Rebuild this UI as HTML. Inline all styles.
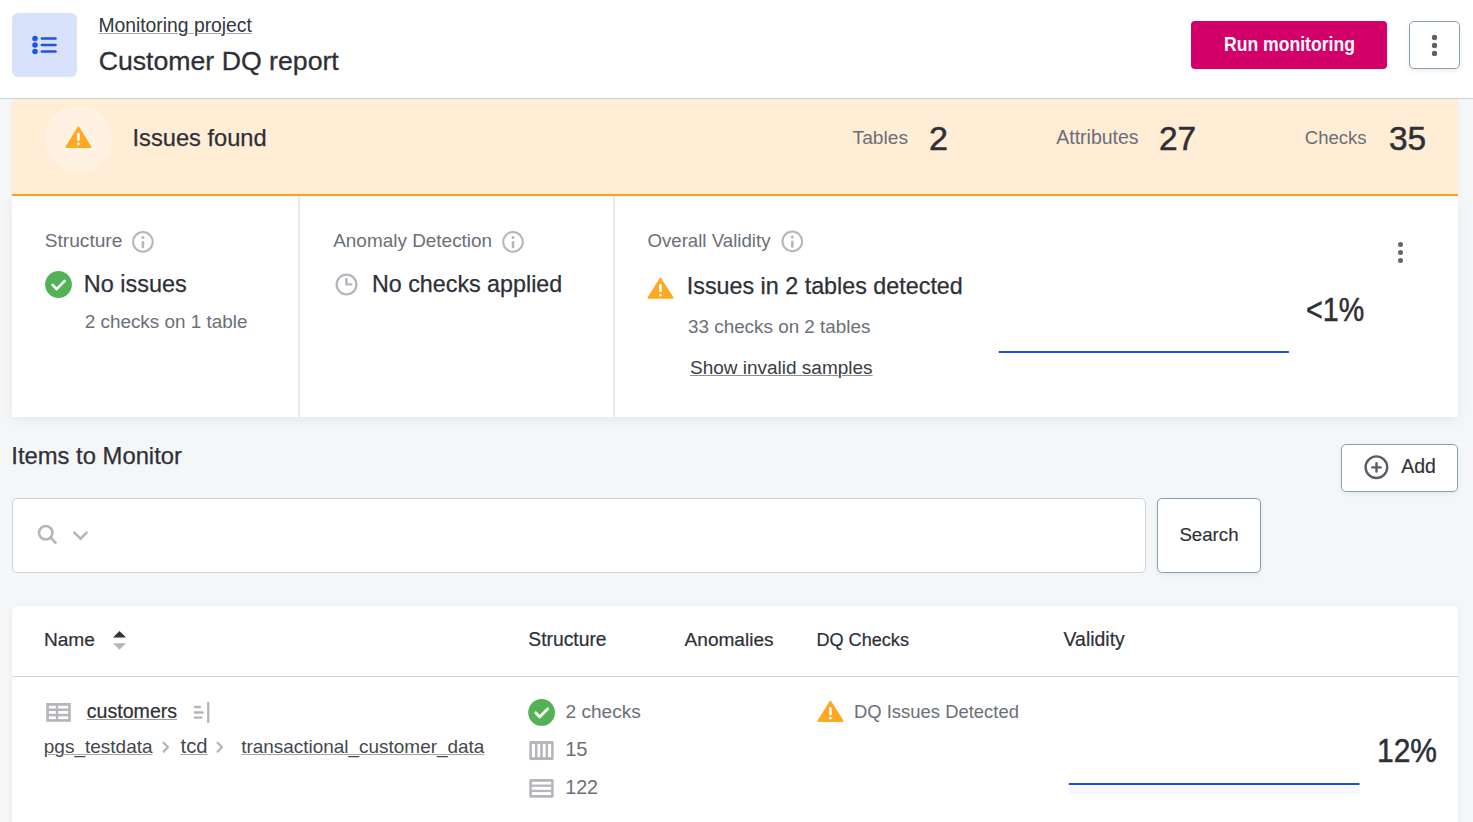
<!DOCTYPE html>
<html><head><meta charset="utf-8"><title>Customer DQ report</title>
<style>
html,body{margin:0;padding:0;}
body{width:1473px;height:822px;overflow:hidden;position:relative;background:#f4f6f8;font-family:"Liberation Sans",sans-serif;}
.t{position:absolute;white-space:nowrap;}
.b{position:absolute;box-sizing:border-box;}
svg{position:absolute;overflow:visible;}
</style></head><body>
<div class="b" style="left:0;top:0;width:1473px;height:99px;background:#fff;border-bottom:1px solid #c9d3da;"></div>
<div class="b" style="left:12px;top:13px;width:65px;height:64px;background:#d9e2fb;border-radius:6px;"></div>
<div class="b" style="left:1191px;top:21px;width:196px;height:48px;background:#d4006a;border-radius:4px;"></div>
<div class="b" style="left:1409px;top:21px;width:51px;height:48px;background:#fff;border:1px solid #87a0af;border-radius:5px;box-shadow:0 2px 5px rgba(0,0,0,0.07);"></div>
<div class="b" style="left:12px;top:99px;width:1446px;height:97px;background:#ffedd5;border-bottom:2px solid #ffa11f;box-shadow:0 1px 4px rgba(0,0,0,0.05);"></div>
<div class="b" style="left:45px;top:105px;width:67px;height:67px;border-radius:50%;background:#fff2e3;"></div>
<div class="b" style="left:12px;top:196px;width:1446px;height:221px;background:#fff;box-shadow:0 4px 12px rgba(0,0,0,0.06);"></div>
<div class="b" style="left:298px;top:196px;width:2px;height:221px;background:#e6eaed;"></div>
<div class="b" style="left:613px;top:196px;width:2px;height:221px;background:#e6eaed;"></div>
<div class="b" style="left:1341px;top:444px;width:117px;height:48px;background:#fff;border:1px solid #87a0af;border-radius:5px;box-shadow:0 2px 5px rgba(0,0,0,0.06);"></div>
<div class="b" style="left:12px;top:498px;width:1134px;height:75px;background:#fff;border:1px solid #c8d3db;border-radius:5px;"></div>
<div class="b" style="left:1157px;top:498px;width:104px;height:75px;background:#fff;border:1px solid #87a0af;border-radius:5px;box-shadow:0 2px 5px rgba(0,0,0,0.06);"></div>
<div class="b" style="left:12px;top:606px;width:1446px;height:240px;background:#fff;border-radius:6px;box-shadow:0 1px 5px rgba(0,0,0,0.06);"></div>
<div class="b" style="left:12px;top:676px;width:1446px;height:1px;background:#cdd6dd;"></div>
<svg style="left:0;top:0" width="1473" height="822">
<g fill="#1f52e8"><circle cx="35" cy="38.6" r="2.75"/><circle cx="35" cy="45" r="2.75"/><circle cx="35" cy="51.5" r="2.75"/></g>
<g stroke="#1f52e8" stroke-width="2.5" stroke-linecap="round"><path d="M41.8 38.6 H55.6 M41.8 45 H55.6 M41.8 51.5 H55.6"/></g>
<g fill="#5f6068"><circle cx="1434.5" cy="37.4" r="2.65"/><circle cx="1434.5" cy="45.4" r="2.65"/><circle cx="1434.5" cy="53.4" r="2.65"/></g>
<path d="M78.4 127.6 L90.39999999999999 147.0 L66.5 147.0 Z" fill="#ffa922" stroke="#ffa922" stroke-width="2.0" stroke-linejoin="round"/><path d="M78.4 134.2 V139.7" stroke="#fff" stroke-width="2.7" stroke-linecap="round"/><circle cx="78.4" cy="144.0" r="1.4" fill="#fff"/>
<circle cx="142.9" cy="241.9" r="9.8" fill="none" stroke="#b5b6bb" stroke-width="2"/><circle cx="142.9" cy="237.5" r="1.5" fill="#b5b6bb"/><path d="M142.9 242.3 V247.1" stroke="#b5b6bb" stroke-width="2.6" stroke-linecap="round"/>
<circle cx="513" cy="241.9" r="9.8" fill="none" stroke="#b5b6bb" stroke-width="2"/><circle cx="513" cy="237.5" r="1.5" fill="#b5b6bb"/><path d="M513 242.3 V247.1" stroke="#b5b6bb" stroke-width="2.6" stroke-linecap="round"/>
<circle cx="792.3" cy="241.4" r="9.8" fill="none" stroke="#b5b6bb" stroke-width="2"/><circle cx="792.3" cy="237.0" r="1.5" fill="#b5b6bb"/><path d="M792.3 241.8 V246.6" stroke="#b5b6bb" stroke-width="2.6" stroke-linecap="round"/>
<circle cx="58.5" cy="284.5" r="13.4" fill="#53b156"/><path d="M52.6 284.9 L56.6 289.1 L64.7 280.9" fill="none" stroke="#fff" stroke-width="2.7" stroke-linecap="round" stroke-linejoin="round"/>
<circle cx="346.5" cy="284.5" r="9.85" fill="none" stroke="#b5b6bb" stroke-width="2.3"/>
<path d="M346.4 278.1 V284.4 H352.4" fill="none" stroke="#b5b6bb" stroke-width="2.4"/>
<path d="M660.4 278.70000000000005 L672.5 297.8 L648.5 297.8 Z" fill="#ffa922" stroke="#ffa922" stroke-width="2.0" stroke-linejoin="round"/><path d="M660.4 285.3 V290.8" stroke="#fff" stroke-width="2.7" stroke-linecap="round"/><circle cx="660.4" cy="295.1" r="1.4" fill="#fff"/>
<rect x="998.8" y="351" width="290.1" height="2" fill="#1b4de5"/>
<g fill="#62646b"><circle cx="1400.5" cy="244.4" r="2.5"/><circle cx="1400.5" cy="252.4" r="2.5"/><circle cx="1400.5" cy="260.5" r="2.5"/></g>
<circle cx="1376.4" cy="467.2" r="10.8" fill="none" stroke="#5b5d64" stroke-width="2.4"/>
<path d="M1376.5 463.2 V471.6 M1372.3 467.4 H1380.7" stroke="#5b5d64" stroke-width="2.4" stroke-linecap="round"/>
<circle cx="45.75" cy="532.75" r="6.7" fill="none" stroke="#b5b6bb" stroke-width="2.6"/>
<path d="M50.6 537.6 L56.3 543.5" stroke="#b5b6bb" stroke-width="2.6"/>
<path d="M73.6 531.8 L80.5 538.7 L87.4 531.8" fill="none" stroke="#b5b6bb" stroke-width="2.5"/>
<path d="M119.5 631.1 L126 637.6 L113 637.6 Z" fill="#333439"/>
<path d="M113 643.2 L126 643.2 L119.5 649.8 Z" fill="#b6b6bb"/>
<rect x="46.2" y="703" width="24.6" height="18.8" fill="#b5b6bb"/>
<g fill="#fff"><rect x="48.9" y="705.8" width="7" height="2.7"/><rect x="58.2" y="705.8" width="9.9" height="2.7"/><rect x="48.9" y="711" width="7" height="2.8"/><rect x="58.2" y="711" width="9.9" height="2.8"/><rect x="48.9" y="716.3" width="7" height="2.8"/><rect x="58.2" y="716.3" width="9.9" height="2.8"/></g>
<g stroke="#b5b6bb" stroke-width="2.3" stroke-linecap="round"><path d="M194.8 707 H200 M194.8 712.5 H202.8 M194.8 717.7 H201.5"/></g>
<rect x="207.1" y="701.9" width="2.3" height="21" fill="#b5b6bb"/>
<path d="M163.6 742.8 L168 747.2 L163.6 751.6" fill="none" stroke="#b5b6bb" stroke-width="2.3" stroke-linecap="round" stroke-linejoin="round"/>
<path d="M217.6 742.8 L222 747.2 L217.6 751.6" fill="none" stroke="#b5b6bb" stroke-width="2.3" stroke-linecap="round" stroke-linejoin="round"/>
<circle cx="541.6" cy="712.4" r="13.4" fill="#53b156"/><path d="M535.7 712.8 L539.7 717.0 L547.8000000000001 708.8" fill="none" stroke="#fff" stroke-width="2.7" stroke-linecap="round" stroke-linejoin="round"/>
<rect x="529.3" y="740.9" width="24.4" height="19.1" rx="1.5" fill="#b5b6bb"/>
<g fill="#fff"><rect x="531.9" y="743.9" width="3.1" height="13.2"/><rect x="537.5" y="743.9" width="2.7" height="13.2"/><rect x="542.8" y="743.9" width="2.8" height="13.2"/><rect x="548.1" y="743.9" width="3" height="13.2"/></g>
<rect x="529.3" y="779" width="24.4" height="18.7" rx="1.5" fill="#b5b6bb"/>
<g fill="#fff"><rect x="531.9" y="781.8" width="19.2" height="2.7"/><rect x="531.9" y="786.8" width="19.2" height="3"/><rect x="531.9" y="792.1" width="19.2" height="2.9"/></g>
<path d="M830.4 701.8000000000001 L842.5 720.9 L818.5 720.9 Z" fill="#ffa922" stroke="#ffa922" stroke-width="2.0" stroke-linejoin="round"/><path d="M830.4 708.4000000000001 V713.9000000000001" stroke="#fff" stroke-width="2.7" stroke-linecap="round"/><circle cx="830.4" cy="718.2" r="1.4" fill="#fff"/>
<rect x="1068.8" y="786" width="290.7" height="8" fill="#f7f8fd"/>
<rect x="1068.8" y="783" width="290.7" height="2" fill="#1b4de5"/>
</svg>

<div class="t" style="left:98.39px;top:16.00px;font-size:19.32px;line-height:19.32px;font-weight:400;color:#34363c;text-decoration:underline;text-decoration-color:#a9adb3;text-decoration-thickness:1px;text-underline-offset:1px">Monitoring project</div>
<div class="t" style="left:98.65px;top:48.01px;font-size:26.68px;line-height:26.68px;font-weight:400;color:#2e3036;-webkit-text-stroke:0.3px #2e3036;">Customer DQ report</div>
<div class="t" style="left:1223.70px;top:35.00px;font-size:19.91px;line-height:19.91px;font-weight:700;color:#ffffff;transform:scaleX(0.8835);transform-origin:0 0;">Run monitoring</div>
<div class="t" style="left:132.55px;top:127.01px;font-size:23.66px;line-height:23.66px;font-weight:400;color:#2e3036;-webkit-text-stroke:0.25px #2e3036;">Issues found</div>
<div class="t" style="left:852.60px;top:128.01px;font-size:19.16px;line-height:19.16px;font-weight:400;color:#6b6f78;">Tables</div>
<div class="t" style="left:929.40px;top:123.01px;font-size:32.71px;line-height:32.71px;font-weight:400;color:#2e3036;-webkit-text-stroke:0.5px #2e3036;transform:scaleX(1.0435);transform-origin:0 0;">2</div>
<div class="t" style="left:1056.30px;top:128.01px;font-size:19.49px;line-height:19.49px;font-weight:400;color:#6b6f78;">Attributes</div>
<div class="t" style="left:1159.43px;top:123.01px;font-size:32.71px;line-height:32.71px;font-weight:400;color:#2e3036;-webkit-text-stroke:0.5px #2e3036;transform:scaleX(1.0231);transform-origin:0 0;">27</div>
<div class="t" style="left:1304.83px;top:129.01px;font-size:18.52px;line-height:18.52px;font-weight:400;color:#6b6f78;">Checks</div>
<div class="t" style="left:1388.55px;top:123.01px;font-size:32.71px;line-height:32.71px;font-weight:400;color:#2e3036;-webkit-text-stroke:0.5px #2e3036;transform:scaleX(1.0224);transform-origin:0 0;">35</div>
<div class="t" style="left:44.70px;top:231.00px;font-size:19.17px;line-height:19.17px;font-weight:400;color:#6b6f78;">Structure</div>
<div class="t" style="left:83.77px;top:273.00px;font-size:23.45px;line-height:23.45px;font-weight:400;color:#2e3036;-webkit-text-stroke:0.25px #2e3036;">No issues</div>
<div class="t" style="left:84.71px;top:313.00px;font-size:18.9px;line-height:18.9px;font-weight:400;color:#6b6f78;">2 checks on 1 table</div>
<div class="t" style="left:333.20px;top:232.00px;font-size:18.95px;line-height:18.95px;font-weight:400;color:#6b6f78;">Anomaly Detection</div>
<div class="t" style="left:371.98px;top:273.00px;font-size:23.29px;line-height:23.29px;font-weight:400;color:#2e3036;-webkit-text-stroke:0.25px #2e3036;">No checks applied</div>
<div class="t" style="left:647.43px;top:232.01px;font-size:18.66px;line-height:18.66px;font-weight:400;color:#6b6f78;">Overall Validity</div>
<div class="t" style="left:686.78px;top:275.01px;font-size:23.32px;line-height:23.32px;font-weight:400;color:#2e3036;-webkit-text-stroke:0.25px #2e3036;">Issues in 2 tables detected</div>
<div class="t" style="left:688.01px;top:318.01px;font-size:18.88px;line-height:18.88px;font-weight:400;color:#6b6f78;">33 checks on 2 tables</div>
<div class="t" style="left:690.01px;top:358.00px;font-size:18.99px;line-height:18.99px;font-weight:400;color:#3a3c42;text-decoration:underline;text-decoration-color:#8c9096;text-decoration-thickness:1px;text-underline-offset:1px">Show invalid samples</div>
<div class="t" style="left:1305.96px;top:294.01px;font-size:32.71px;line-height:32.71px;font-weight:400;color:#2e3036;-webkit-text-stroke:0.5px #2e3036;transform:scaleX(0.8767);transform-origin:0 0;">&lt;1%</div>
<div class="t" style="left:11.34px;top:444.01px;font-size:23.81px;line-height:23.81px;font-weight:400;color:#2e3036;-webkit-text-stroke:0.25px #2e3036;">Items to Monitor</div>
<div class="t" style="left:1179.42px;top:526.01px;font-size:18.66px;line-height:18.66px;font-weight:400;color:#2e3036;-webkit-text-stroke:0.15px #2e3036;">Search</div>
<div class="t" style="left:1401.30px;top:457.01px;font-size:19.44px;line-height:19.44px;font-weight:400;color:#2e3036;-webkit-text-stroke:0.15px #2e3036;">Add</div>
<div class="t" style="left:43.91px;top:630.01px;font-size:19.11px;line-height:19.11px;font-weight:400;color:#2e3036;-webkit-text-stroke:0.2px #2e3036;">Name</div>
<div class="t" style="left:528.30px;top:630.00px;font-size:19.3px;line-height:19.3px;font-weight:400;color:#2e3036;-webkit-text-stroke:0.2px #2e3036;">Structure</div>
<div class="t" style="left:684.60px;top:630.00px;font-size:19.06px;line-height:19.06px;font-weight:400;color:#2e3036;-webkit-text-stroke:0.2px #2e3036;">Anomalies</div>
<div class="t" style="left:816.38px;top:631.01px;font-size:18.13px;line-height:18.13px;font-weight:400;color:#2e3036;-webkit-text-stroke:0.2px #2e3036;">DQ Checks</div>
<div class="t" style="left:1063.60px;top:630.00px;font-size:19.43px;line-height:19.43px;font-weight:400;color:#2e3036;-webkit-text-stroke:0.2px #2e3036;">Validity</div>
<div class="t" style="left:86.79px;top:702.00px;font-size:19.58px;line-height:19.58px;font-weight:400;color:#2e3036;-webkit-text-stroke:0.2px #2e3036;text-decoration:underline;text-decoration-color:#9a9ea5;text-decoration-thickness:1px;text-underline-offset:1px">customers</div>
<div class="t" style="left:43.81px;top:737.01px;font-size:19.01px;line-height:19.01px;font-weight:400;color:#44474e;text-decoration:underline;text-decoration-color:#a4a8ae;text-decoration-thickness:1px;text-underline-offset:1px">pgs_testdata</div>
<div class="t" style="left:180.60px;top:736.00px;font-size:20.27px;line-height:20.27px;font-weight:400;color:#44474e;text-decoration:underline;text-decoration-color:#a4a8ae;text-decoration-thickness:1px;text-underline-offset:1px">tcd</div>
<div class="t" style="left:241.20px;top:738.00px;font-size:18.95px;line-height:18.95px;font-weight:400;color:#44474e;text-decoration:underline;text-decoration-color:#a4a8ae;text-decoration-thickness:1px;text-underline-offset:1px">transactional_customer_data</div>
<div class="t" style="left:565.50px;top:702.01px;font-size:19.1px;line-height:19.1px;font-weight:400;color:#6b6f78;">2 checks</div>
<div class="t" style="left:565.14px;top:739.01px;font-size:20.21px;line-height:20.21px;font-weight:400;color:#6b6f78;">15</div>
<div class="t" style="left:565.17px;top:778.00px;font-size:19.74px;line-height:19.74px;font-weight:400;color:#6b6f78;">122</div>
<div class="t" style="left:853.96px;top:703.01px;font-size:18.46px;line-height:18.46px;font-weight:400;color:#6b6f78;">DQ Issues Detected</div>
<div class="t" style="left:1377.33px;top:735.01px;font-size:32.71px;line-height:32.71px;font-weight:400;color:#2e3036;-webkit-text-stroke:0.5px #2e3036;transform:scaleX(0.9159);transform-origin:0 0;">12%</div>
</body></html>
